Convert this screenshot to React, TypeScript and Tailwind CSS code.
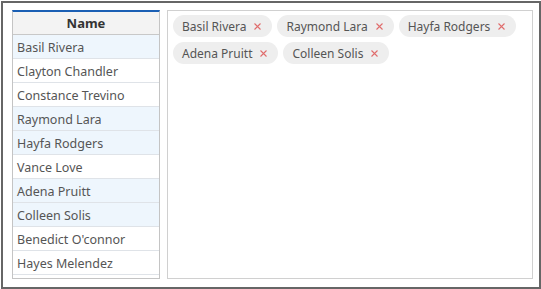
import React from 'react';

const people = [
  'Basil Rivera',
  'Clayton Chandler',
  'Constance Trevino',
  'Raymond Lara',
  'Hayfa Rodgers',
  'Vance Love',
  'Adena Pruitt',
  'Colleen Solis',
  "Benedict O'connor",
  'Hayes Melendez',
];

const picked = ['Basil Rivera', 'Raymond Lara', 'Hayfa Rodgers', 'Adena Pruitt', 'Colleen Solis'];

export default function App() {
  return (
    <div className="w-[541px] h-[289px] bg-white font-['Noto_Sans',sans-serif]">
      <div className="ml-px mt-px w-[540px] h-[288px] border-2 border-[#666666] flex gap-[7px] pl-[9px] pr-[6px] pt-[7px] pb-[8px]">
        {/* Name grid */}
        <div className="w-[148px] h-[269px] border border-[#c4c4c4] border-t-2 border-t-[#1a5fb4] flex flex-col">
          <div className="h-[23px] shrink-0 bg-[#f3f3f3] border-b border-[#c8c8c8] flex items-center justify-center pt-[2px] text-[13px] font-bold text-[#333333]">
            Name
          </div>
          {people.map((p) => (
            <div
              key={p}
              className={`h-[24px] shrink-0 border-b border-[#dfe3e8] flex items-center px-[4px] pt-[3px] text-[12.5px] text-[#555555] ${
                picked.includes(p) ? 'bg-[#eef6fd]' : 'bg-white'
              }`}
            >
              {p}
            </div>
          ))}
        </div>

        {/* Selected tags */}
        <div className="flex-1 h-[269px] border border-[#d0d0d0] px-[5px] pt-[4px] flex flex-wrap content-start gap-[5px]">
          {picked.map((p) => (
            <div
              key={p}
              className="h-[22px] rounded-full bg-[#eeeeee] flex items-center pl-[9px] pr-[11px] gap-[8px] pt-px text-[12px] text-[#555555]"
            >
              <span>{p}</span>
              <svg width="7" height="7" viewBox="0 0 7 7" className="shrink-0">
                <path d="M0.5 0.5 L6.5 6.5 M6.5 0.5 L0.5 6.5" stroke="#e06c6c" strokeWidth="1.1" />
              </svg>
            </div>
          ))}
        </div>
      </div>
    </div>
  );
}
